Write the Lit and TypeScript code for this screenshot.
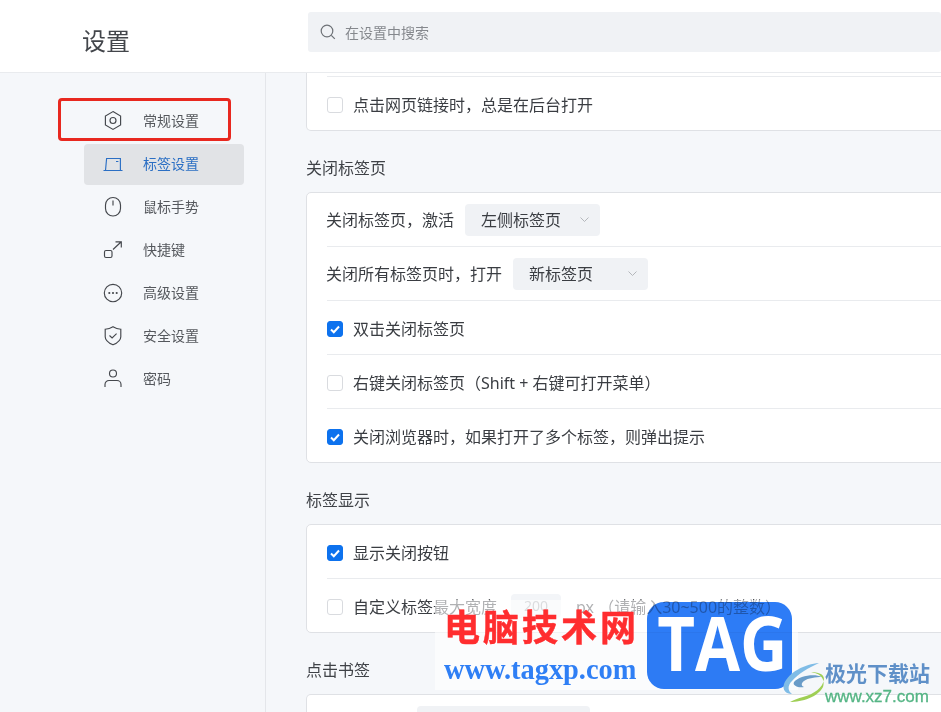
import { LitElement, html, css, svg } from "lit";
import { customElement } from "lit/decorators.js";

const stroke = svg;
const icons = {
  hex: stroke`<path d="M12 2.6 19.6 7v9L12 20.4 4.4 16V7z"/><circle cx="12" cy="11.5" r="3"/>`,
  tab: stroke`<path d="M2.5 18.5h19M4.5 18.5 5.6 6.5h13.8v12M15 9.5h2.4"/>`,
  mouse: stroke`<rect x="4.5" y="2.5" width="15" height="18.5" rx="7.5"/><path d="M12 5.5v5"/>`,
  key: stroke`<rect x="3.5" y="12.5" width="7.5" height="7" rx="1.5"/><path d="M12 11.5 20 4M14.5 3.8h5.8v5.6"/>`,
  more: stroke`<circle cx="12" cy="12" r="8.7"/><circle cx="8.3" cy="12" r=".5"/><circle cx="12" cy="12" r=".5"/><circle cx="15.7" cy="12" r=".5"/>`,
  shield: stroke`<path d="M12 2.8c2.6 1.6 5 2.3 7.8 2.5v7.4c0 3.6-3.4 6.2-7.8 8.1-4.4-1.9-7.8-4.5-7.8-8.1V5.3C7 5.100 9.400 4.400 12 2.800z"/><path d="m8.500 11.500 2.600 2.500 4.500-4.300"/>`,
  user: stroke`<circle cx="12" cy="6.500" r="3.500"/><path d="M4 20v-2.500c0-2.200 1.800-4 4-4h8c2.200 0 4 1.800 4 4V20"/>`,
};

type Row =
  | { kind: "check"; label: string; on: boolean }
  | { kind: "select"; label: string; value: string };

const close: Row[] = [
  { kind: "select", label: "关闭标签页，激活", value: "左侧标签页" },
  { kind: "select", label: "关闭所有标签页时，打开", value: "新标签页" },
  { kind: "check", label: "双击关闭标签页", on: true },
  { kind: "check", label: "右键关闭标签页（Shift + 右键可打开菜单）", on: false },
  { kind: "check", label: "关闭浏览器时，如果打开了多个标签，则弹出提示", on: true },
];

@customElement("app-root")
export class AppRoot extends LitElement {
  static styles = css`
    :host {
      display: block;
      position: relative;
      height: 712px;
      overflow: hidden;
      background: #f5f7fa;
      color: #3a3d42;
      font-family: "Noto Sans", "Noto Sans CJK SC", sans-serif;
      font-size: 16px;
    }
    .top {
      height: 73px;
      box-sizing: border-box;
      background: #fff;
      border-bottom: 1px solid #e9ebee;
      display: flex;
      align-items: flex-start;
    }
    .title {
      width: 308px;
      box-sizing: border-box;
      padding: 23px 0 0 82px;
      font-size: 24px;
      line-height: 36px;
      color: #43464b;
      flex: none;
    }
    .search {
      flex: 1;
      height: 40px;
      margin-top: 12px;
      background: #f0f2f5;
      border-radius: 3px;
      display: flex;
      align-items: center;
      gap: 8px;
      padding-left: 11px;
      font-size: 14px;
      color: #85888d;
    }
    .search span { margin-bottom: 1px; }
    .search svg { width: 18px; height: 18px; fill: none; stroke: #6e7277; stroke-width: 1.2; }
    .body { display: flex; height: 639px; }
    .side {
      width: 266px;
      flex: none;
      box-sizing: border-box;
      border-right: 1px solid #e4e6ea;
      padding: 28px 0 0 84px;
      display: flex;
      flex-direction: column;
      gap: 2px;
    }
    .nav {
      width: 160px;
      height: 41px;
      border-radius: 4px;
      display: flex;
      align-items: center;
      font-size: 14px;
      color: #55585d;
      padding-left: 17px;
      box-sizing: border-box;
      gap: 18px;
    }
    .nav span { margin-bottom: 4px; }
    .nav svg {
      width: 24px;
      height: 24px;
      flex: none;
      fill: none;
      stroke: #44474c;
      stroke-width: 1.15;
      margin-bottom: 2px;
    }
    .nav.active { background: #e1e3e6; color: #2b6fc4; }
    .nav.active svg { stroke: #2b6fc4; }
    .main { flex: 1; min-width: 0; overflow: hidden; padding-left: 40px; }
    .card {
      width: 760px;
      box-sizing: border-box;
      background: #fff;
      border: 1px solid #dfe1e5;
      border-radius: 5px;
      padding: 0 20px;
    }
    .card.cut {
      border-top: 0;
      border-radius: 0 0 5px 5px;
      padding-top: 3px;
    }
    .card.open { border-bottom: 0; border-radius: 5px 5px 0 0; }
    .heading {
      height: 61px;
      box-sizing: border-box;
      padding-top: 25px;
      line-height: 24px;
      color: #3f4247;
    }
    .row {
      height: 54px;
      box-sizing: border-box;
      border-top: 1px solid #e9ebee;
      display: flex;
      align-items: center;
      white-space: nowrap;
    }
    .row.first { border-top: 0; height: 53px; }
    .lead { margin: 0 0 2px -1px; }
    .box {
      width: 16px;
      height: 16px;
      box-sizing: border-box;
      border: 1px solid #d9dbdf;
      border-radius: 3px;
      background: #fff;
      margin: 3px 10px 0 0;
      flex: none;
      display: flex;
    }
    .box.on { background: #0d72ee; border-color: #0d72ee; }
    .box svg { width: 14px; height: 14px; fill: none; stroke: #fff; stroke-width: 2; }
    .select {
      width: 135px;
      height: 32px;
      box-sizing: border-box;
      margin-left: 11px;
      padding: 0 10px 0 16px;
      border-radius: 4px;
      background: #f0f2f5;
      display: flex;
      align-items: center;
      justify-content: space-between;
    }
    .select span { margin-bottom: 2px; }
    .select svg { width: 11px; height: 11px; fill: none; stroke: #b4b7bb; stroke-width: 1; }
    .select.wide { width: 173px; margin-left: 90px; }
    .num {
      width: 50px;
      height: 24px;
      margin: 0 15px 0 14px;
      border-radius: 4px;
      background: #f3f5f8;
      color: #a6a9ad;
      font-size: 14px;
      display: flex;
      align-items: center;
      justify-content: center;
    }
    .red {
      position: absolute;
      left: 58px;
      top: 98px;
      width: 173px;
      height: 43px;
      box-sizing: border-box;
      border: 3px solid #e8281f;
      border-radius: 4px;
    }
    .veil {
      position: absolute;
      left: 435px;
      top: 600px;
      width: 363px;
      height: 90px;
      background: rgba(255, 255, 255, 0.6);
    }
    .cn {
      position: absolute;
      left: 444px;
      top: 605px;
      font-size: 36px;
      line-height: 46px;
      letter-spacing: 3px;
      font-weight: 700;
      -webkit-text-stroke: 0.5px #ff2d2f;
      color: #ff2d2f;
      white-space: nowrap;
    }
    .url {
      position: absolute;
      left: 444px;
      top: 655px;
      font-family: "Liberation Serif", serif;
      font-size: 28.400px;
      line-height: 30px;
      font-weight: 700;
      color: #2f7ff5;
      white-space: nowrap;
    }
    .plate {
      position: absolute;
      left: 647px;
      top: 602px;
      width: 145px;
      height: 87px;
      border-radius: 17px;
      background: #2d7cf6;
      mix-blend-mode: multiply;
    }
    .tag {
      position: absolute;
      left: 647px;
      top: 602px;
      width: 145px;
      height: 87px;
      color: #fff;
      font-family: "Open Sans", sans-serif;
      font-size: 76px;
      font-weight: 700;
      line-height: 80px;
      text-align: center;
      transform: scaleX(0.86);
      white-space: nowrap;
    }
    .xz-logo { position: absolute; left: 781px; top: 660px; width: 46px; height: 44px; }
    .xz-cn {
      position: absolute;
      left: 825px;
      top: 659px;
      font-size: 21px;
      line-height: 28px;
      font-weight: 700;
      color: #5f90c8;
      white-space: nowrap;
    }
    .xz-url {
      position: absolute;
      left: 825px;
      top: 687px;
      font-family: "Liberation Sans", sans-serif;
      font-size: 17px;
      line-height: 20px;
      color: #55b585;
      -webkit-text-stroke: 0.3px #55b585;
      white-space: nowrap;
    }
  `;

  private chevron() {
    return html`<svg viewBox="0 0 11 11"><path d="m1.500 3.500 4 4 4-4" /></svg>`;
  }

  private box(on: boolean) {
    return html`<span class="box ${on ? "on" : ""}">
      ${on
        ? html`<svg viewBox="0 0 14 14"><path d="m3 7.500 2.800 2.700L11 4.500" /></svg>`
        : ""}
    </span>`;
  }

  private row(r: Row, first: boolean) {
    const cls = `row ${first ? "first" : ""}`;
    if (r.kind === "check") {
      return html`<div class=${cls}>${this.box(r.on)}<span>${r.label}</span></div>`;
    }
    return html`<div class=${cls}>
      <span class="lead">${r.label}</span>
      <div class="select"><span>${r.value}</span>${this.chevron()}</div>
    </div>`;
  }

  render() {
    const nav: [keyof typeof icons, string][] = [
      ["hex", "常规设置"],
      ["tab", "标签设置"],
      ["mouse", "鼠标手势"],
      ["key", "快捷键"],
      ["more", "高级设置"],
      ["shield", "安全设置"],
      ["user", "密码"],
    ];
    return html`
      <div class="top" lang="zh-CN">
        <div class="title">设置</div>
        <div class="search">
          <svg viewBox="0 0 18 18"><circle cx="8" cy="8" r="5.800" /><path d="m12.300 12.300 3.500 3.500" /></svg>
          <span>在设置中搜索</span>
        </div>
      </div>
      <div class="body" lang="zh-CN">
        <nav class="side">
          ${nav.map(
            ([i, t]) => html`<div class="nav ${i === "tab" ? "active" : ""}">
              <svg viewBox="0 0 24 24">${icons[i]}</svg><span>${t}</span>
            </div>`
          )}
        </nav>
        <main class="main">
          <div class="card cut">
            ${this.row({ kind: "check", label: "点击网页链接时，总是在后台打开", on: false }, false)}
          </div>
          <div class="heading">关闭标签页</div>
          <div class="card">${close.map((r, i) => this.row(r, i === 0))}</div>
          <div class="heading">标签显示</div>
          <div class="card">
            ${this.row({ kind: "check", label: "显示关闭按钮", on: true }, true)}
            <div class="row">
              ${this.box(false)}<span>自定义标签最大宽度</span>
              <div class="num">200</div>
              <span>px （请输入30~500的整数）</span>
            </div>
          </div>
          <div class="heading">点击书签</div>
          <div class="card open">
            <div class="row first"><div class="select wide"></div></div>
          </div>
        </main>
      </div>
      <div class="red"></div>
      <div class="veil"></div>
      <div class="cn" lang="zh-CN">电脑技术网</div>
      <div class="url">www.tagxp.com</div>
      <div class="plate"></div>
      <div class="tag">TAG</div>
      <svg class="xz-logo" viewBox="0 0 46 44" fill="none">
        <path d="M38 3C24 4 8 12 3 24c-2 6 2 10 8 10-4-3-5-8 0-13C17 14 27 8 38 3z" fill="#7fbce6" />
        <path d="M13 22c5-6 20-9 28-5-6 0-14 1-18 4-3 2-3 5 0 6-5 1-12-1-10-5z" fill="#6a9cc8" />
        <path d="M30 12c7 0 13 2 13 7-1 9-10 15-21 18-5 1-9 3-13 5 12 0 28-5 33-15 2-6 0-13-12-15z" fill="#9fcf55" />
      </svg>
      <div class="xz-cn" lang="zh-CN">极光下载站</div>
      <div class="xz-url">www.xz7.com</div>
    `;
  }
}
